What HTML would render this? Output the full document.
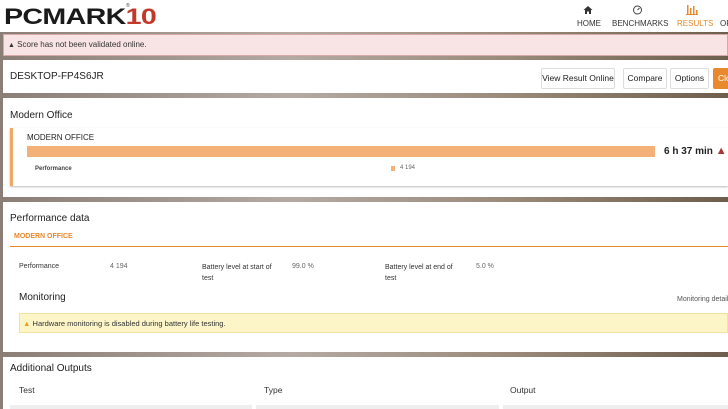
<!DOCTYPE html>
<html><head><meta charset="utf-8"><style>
*{margin:0;padding:0;box-sizing:border-box}
body{width:728px;height:409px;overflow:hidden;position:relative;font-family:"Liberation Sans",sans-serif;color:#222;background:linear-gradient(90deg,#8a7e76 0%,#b4aaa3 40%,#9a8a7a 70%,#6e5e4e 100%)}
.abs{position:absolute}
.panel{position:absolute;left:3px;right:0;background:#fff}
.t{position:absolute;white-space:nowrap}
.btn{position:absolute;top:68px;height:21px;border:1px solid #ddd;border-radius:2px;background:#fff;font-size:8.5px;line-height:19px;text-align:center;color:#222;overflow:hidden}
</style></head><body>
<div class="abs" style="left:0;top:0;width:728px;height:32px;background:#fff"></div>
<div class="t" style="left:4px;top:4px;font-size:22px;font-weight:900;letter-spacing:-0.5px;color:#1a1a1a;transform:scaleX(1.3);transform-origin:left">PCMARK<span style="color:#c0392b">10</span></div>
<div class="t" style="left:126px;top:3px;font-size:5px;color:#444">®</div>
<svg class="abs" style="left:583px;top:5px" width="10" height="10" viewBox="0 0 10 10"><path d="M5 1L0.5 5H2V9H4V6.5H6V9H8V5H9.5Z" fill="#333"/></svg>
<svg class="abs" style="left:632px;top:4px" width="11" height="11" viewBox="0 0 11 11"><circle cx="5.5" cy="6" r="4" fill="none" stroke="#444" stroke-width="1"/><path d="M5.5 6L7.5 4" stroke="#444"/></svg>
<svg class="abs" style="left:686px;top:4px" width="12" height="11" viewBox="0 0 12 11"><rect x="1" y="1" width="1.5" height="9" fill="#e8892d"/><rect x="4" y="4" width="1.5" height="6" fill="#e8892d"/><rect x="7" y="2" width="1.5" height="8" fill="#e8892d"/><rect x="10" y="6" width="1.5" height="4" fill="#e8892d"/><rect x="0" y="10" width="12" height="1" fill="#e8892d"/></svg>
<div class="t" style="left:577px;top:19px;font-size:8px;color:#333">HOME</div>
<div class="t" style="left:612px;top:19px;font-size:8px;color:#333">BENCHMARKS</div>
<div class="t" style="left:677px;top:19px;font-size:8px;color:#e8892d">RESULTS</div>
<div class="t" style="left:720px;top:19px;font-size:8px;color:#333">OP</div>
<div class="abs" style="left:3px;top:34px;width:725px;height:22px;background:#f8e4e4;border:1px solid #d8a8a8"></div>
<div class="t" style="left:8px;top:40px;font-size:8px;color:#333"><span style="font-size:7px">▲</span> Score has not been validated online.</div>
<div class="panel" style="top:60px;height:33px"></div>
<div class="t" style="left:10px;top:71px;font-size:10px;color:#222">DESKTOP-FP4S6JR</div>
<div class="btn" style="left:541px;width:74px">View Result Online</div>
<div class="btn" style="left:623px;width:44px">Compare</div>
<div class="btn" style="left:670px;width:39px">Options</div>
<div class="btn" style="left:713px;width:20px;background:#e8892d;color:#fff;border-color:#e8892d;text-align:left;padding-left:4px">Clo</div>
<div class="panel" style="top:98px;height:99px"></div>
<div class="t" style="left:10px;top:110px;font-size:10px">Modern Office</div>
<div class="abs" style="left:10px;top:128px;width:718px;height:58px;background:#fff;border-left:3px solid #f0a868;box-shadow:0 1px 2px #bbb"></div>
<div class="t" style="left:27px;top:133px;font-size:8px">MODERN OFFICE</div>
<div class="abs" style="left:27px;top:146px;width:628px;height:11px;background:#f3b077"></div>
<div class="t" style="left:664px;top:145px;font-size:10px;font-weight:bold">6 h 37 min <span style="color:#a33;font-size:11px">▲</span></div>
<div class="t" style="left:35px;top:166px;font-size:6px;font-weight:bold;color:#444">Performance</div>
<div class="abs" style="left:391px;top:166px;width:4px;height:5px;background:#f3b077"></div>
<div class="t" style="left:400px;top:165px;font-size:6px;color:#666">4 194</div>
<div class="panel" style="top:202px;height:150px"></div>
<div class="t" style="left:10px;top:213px;font-size:10px">Performance data</div>
<div class="t" style="left:14px;top:233px;font-size:7px;font-weight:bold;color:#e8892d">MODERN OFFICE</div>
<div class="abs" style="left:10px;top:246px;width:718px;height:1px;background:#e8892d"></div>
<div class="t" style="left:19px;top:263px;font-size:7px;color:#333">Performance</div>
<div class="t" style="left:110px;top:263px;font-size:7px;color:#666">4 194</div>
<div class="t" style="left:202px;top:262px;font-size:7px;color:#333;line-height:11px">Battery level at start of<br>test</div>
<div class="t" style="left:292px;top:263px;font-size:7px;color:#666">99.0 %</div>
<div class="t" style="left:385px;top:262px;font-size:7px;color:#333;line-height:11px">Battery level at end of<br>test</div>
<div class="t" style="left:476px;top:263px;font-size:7px;color:#666">5.0 %</div>
<div class="t" style="left:19px;top:292px;font-size:10px">Monitoring</div>
<div class="t" style="left:677px;top:296px;font-size:7px;color:#555">Monitoring details</div>
<div class="abs" style="left:19px;top:313px;width:709px;height:20px;background:#fcf5c8;border:1px solid #f2e2a0"></div>
<div class="t" style="left:23px;top:319px;font-size:7.5px;color:#333"><span style="color:#e8a02d">▲</span> Hardware monitoring is disabled during battery life testing.</div>
<div class="panel" style="top:357px;height:52px"></div>
<div class="t" style="left:10px;top:363px;font-size:10px">Additional Outputs</div>
<div class="t" style="left:19px;top:385px;font-size:8.5px;color:#333">Test</div>
<div class="t" style="left:264px;top:385px;font-size:8.5px;color:#333">Type</div>
<div class="t" style="left:510px;top:385px;font-size:8.5px;color:#333">Output</div>
<div class="abs" style="left:10px;top:405px;width:242px;height:4px;background:#eee"></div>
<div class="abs" style="left:256px;top:405px;width:243px;height:4px;background:#eee"></div>
<div class="abs" style="left:503px;top:405px;width:225px;height:4px;background:#eee"></div>
</body></html>
